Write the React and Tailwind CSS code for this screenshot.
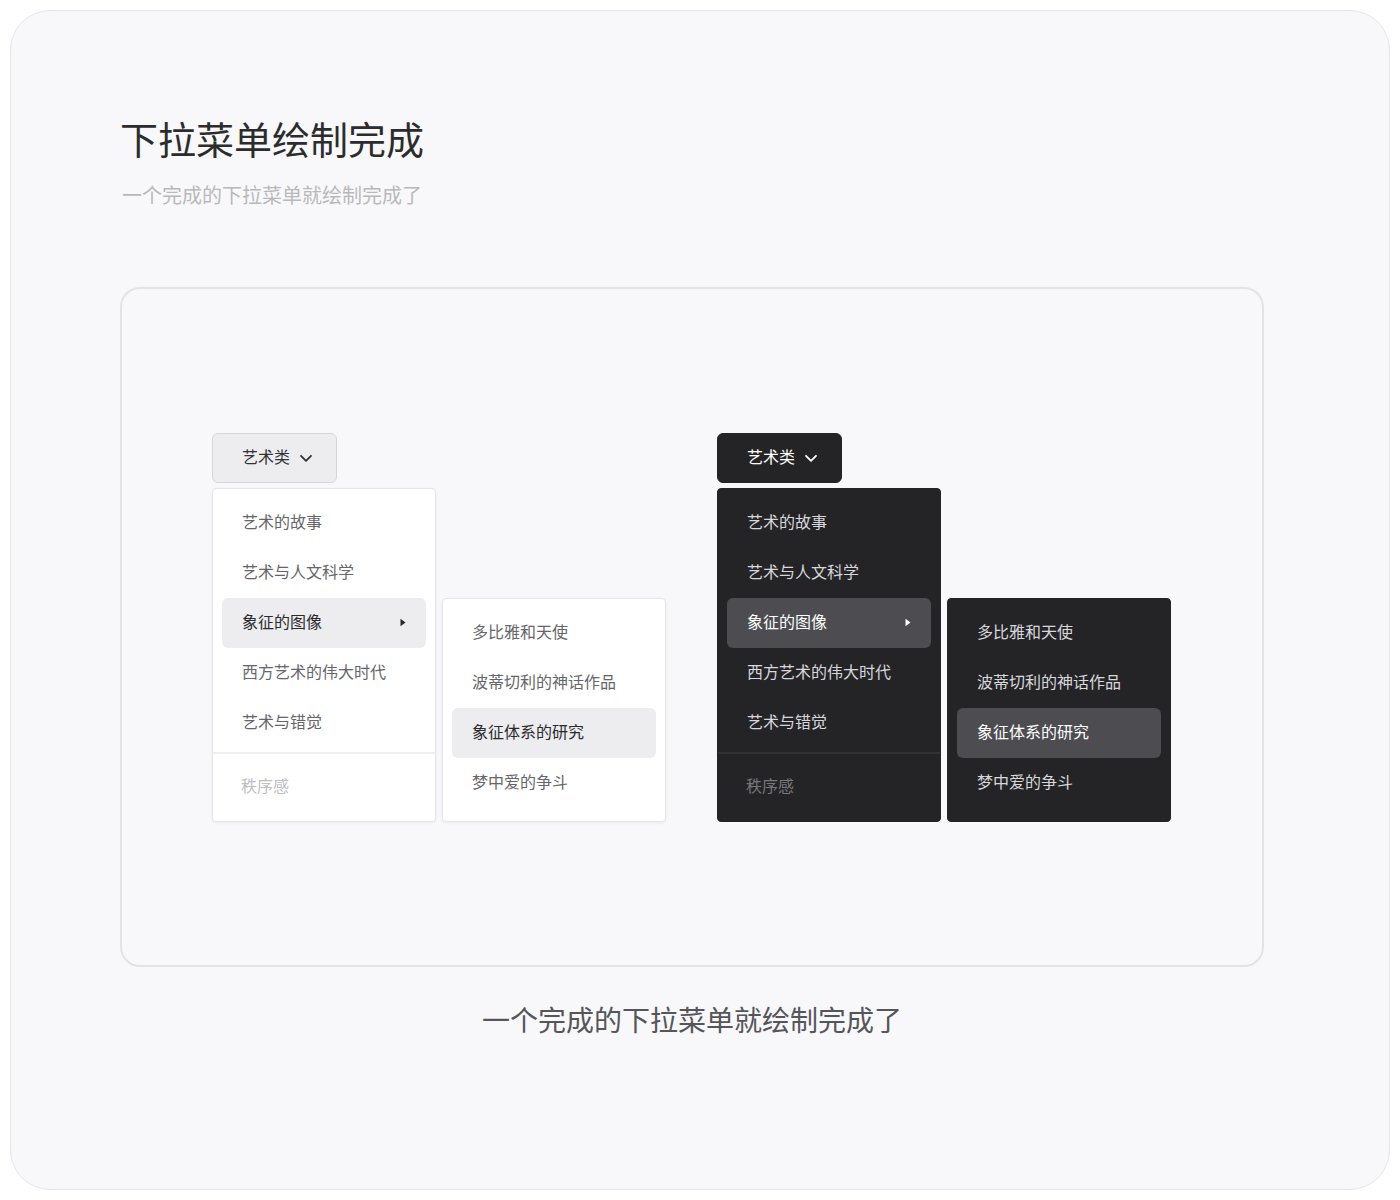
import React from "react";

const FONT = { fontFamily: '"Noto Sans CJK SC", "Noto Sans", sans-serif' };

const MAIN_ITEMS = ["艺术的故事", "艺术与人文科学", "象征的图像", "西方艺术的伟大时代", "艺术与错觉"];
const SUB_ITEMS = ["多比雅和天使", "波蒂切利的神话作品", "象征体系的研究", "梦中爱的争斗"];

const THEMES = {
  light: {
    button: "bg-[#ededf0] border border-[#d6d6da] text-[#333336]",
    menu: "bg-white border border-[#e6e6ea] shadow-[0_1px_3px_rgba(0,0,0,0.06)]",
    item: "text-[#66666a]",
    active: "bg-[#ededf0] text-[#2a2a2d]",
    divider: "bg-[#f0f0f3]",
    disabled: "text-[#bdbdc2]",
    caret: "#2a2a2d",
  },
  dark: {
    button: "bg-[#242427] border border-[#242427] text-white",
    menu: "bg-[#242427] border border-[#242427]",
    item: "text-[#d8d8dc]",
    active: "bg-[#4c4c51] text-white",
    divider: "bg-[#323236]",
    disabled: "text-[#77777c]",
    caret: "#ffffff",
  },
};

function Chevron() {
  return (
    <svg width="16" height="16" viewBox="0 0 16 16" fill="none">
      <path d="M3 5.8l5 5 5-5" stroke="currentColor" strokeWidth="1.8" strokeLinecap="round" strokeLinejoin="round" />
    </svg>
  );
}

function MenuItem({ label, active, t, caret }) {
  return (
    <div
      className={`h-[50px] rounded-[6px] flex items-center justify-between pl-[20px] pr-[20px] pb-[4px] text-[16px] ${
        active ? t.active : t.item
      }`}
    >
      <span>{label}</span>
      {caret && (
        <svg width="6" height="9" viewBox="0 0 6 9" className="mt-[4px]">
          <path d="M0.5 0.8L5.5 4.5L0.5 8.2Z" fill={t.caret} />
        </svg>
      )}
    </div>
  );
}

function Dropdown({ theme }) {
  const t = THEMES[theme];
  return (
    <div className="flex flex-col">
      <div className={`w-[125px] h-[50px] rounded-[6px] flex items-center pl-[29px] gap-[8px] text-[16px] ${t.button}`}>
        <span className="-mt-[3px]">艺术类</span>
        <Chevron />
      </div>
      <div className="flex items-start gap-[6px] mt-[5px]">
        {/* main menu */}
        <div className={`w-[224px] rounded-[4px] overflow-hidden ${t.menu}`}>
          <div className="px-[9px] pt-[9px] pb-1">
            {MAIN_ITEMS.map((label, i) => (
              <MenuItem key={label} label={label} active={i === 2} caret={i === 2} t={t} />
            ))}
          </div>
          <div className={`h-[2px] ${t.divider}`} />
          <div className="px-[9px] pt-[8px] pb-[9px]">
            <div className={`h-[50px] flex items-center pl-[19px] pb-[4px] text-[16px] ${t.disabled}`}>秩序感</div>
          </div>
        </div>
        {/* sub menu */}
        <div className={`w-[224px] h-[224px] mt-[110px] rounded-[4px] px-[9px] pt-[9px] ${t.menu}`}>
          {SUB_ITEMS.map((label, i) => (
            <MenuItem key={label} label={label} active={i === 2} t={t} />
          ))}
        </div>
      </div>
    </div>
  );
}

export default function App() {
  return (
    <div className="min-h-[1200px] bg-white p-[10px]" style={FONT}>
      <div className="h-[1180px] rounded-[40px] border border-[#e6e6ea] bg-[#f8f8fa] pl-[109px] pr-[125px] pt-[104px]">
        <h1 className="text-[38px] leading-[46px] text-[#2c2c2f] font-normal">下拉菜单绘制完成</h1>
        <p className="mt-[20px] text-[20px] leading-[28px] text-[#b8b8bc] pl-[2px]">一个完成的下拉菜单就绘制完成了</p>

        <div className="mt-[78px] h-[680px] rounded-[20px] border-2 border-[#e3e3e7] flex items-center pl-[90px] gap-[51px]">
          <Dropdown theme="light" />
          <Dropdown theme="dark" />
        </div>

        <p className="mt-[32px] text-center text-[28px] leading-[40px] text-[#55555a]">一个完成的下拉菜单就绘制完成了</p>
      </div>
    </div>
  );
}
